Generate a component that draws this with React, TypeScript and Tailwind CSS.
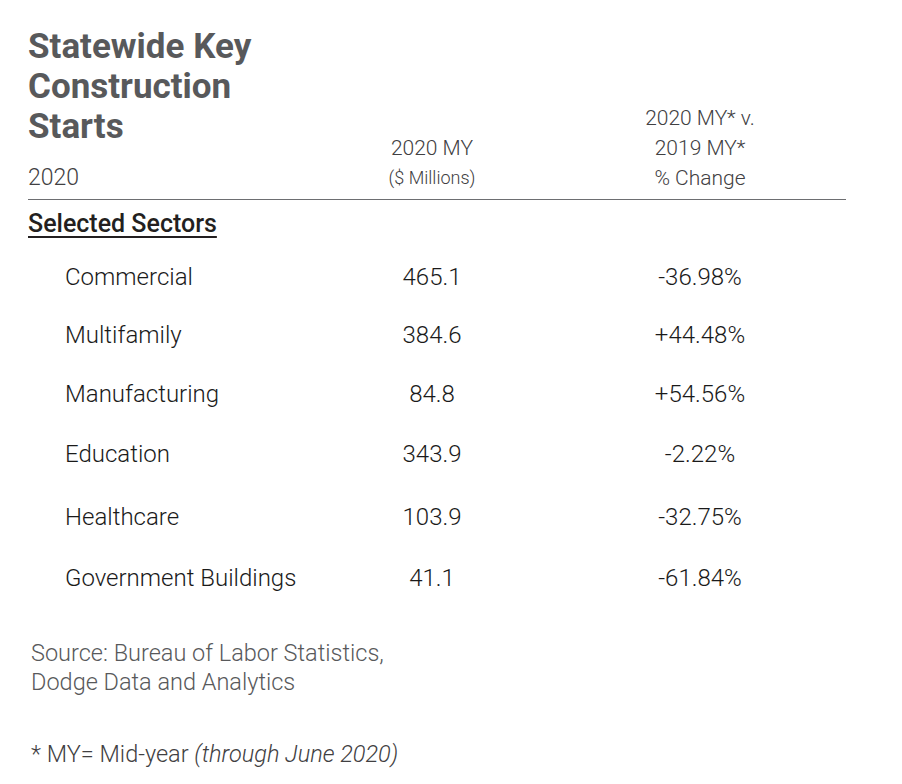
const ROWS = [
  { name: "Commercial", value: "465.1", change: "-36.98%", h: "h-[58px]" },
  { name: "Multifamily", value: "384.6", change: "+44.48%", h: "h-[58px]" },
  { name: "Manufacturing", value: "84.8", change: "+54.56%", h: "h-[59px]" },
  { name: "Education", value: "343.9", change: "-2.22%", h: "h-[62px]" },
  { name: "Healthcare", value: "103.9", change: "-32.75%", h: "h-[63px]" },
  { name: "Government Buildings", value: "41.1", change: "-61.84%", h: "h-[60px]" },
];

export default function App() {
  return (
    <div className="min-h-[784px] w-[902px] bg-white pl-[28px] pt-[27px] font-['Roboto',sans-serif]">
      {/* header */}
      <div className="grid w-[818px] grid-cols-[304px_200px_336px] items-end border-b-[1.5px] border-[#6d6e71] pb-[6px]">
        <div>
          <h1 className="w-[270px] text-[35px] font-bold leading-[40px] text-[#58595b]">
            Statewide Key Construction Starts
          </h1>
          <p className="mt-[16px] text-[23px] font-light leading-[30px] text-[#414042]">2020</p>
        </div>
        <div className="text-center font-light text-[#414042]">
          <p className="text-[21px] leading-[30px]">2020 MY</p>
          <p className="text-[18px] leading-[30px]">($ Millions)</p>
        </div>
        <div className="text-center text-[21px] font-light leading-[30px] text-[#414042]">
          <p>2020 MY* v.</p>
          <p>2019 MY*</p>
          <p>% Change</p>
        </div>
      </div>

      <p className="mt-[9px] text-[25px] font-medium leading-[30px] text-[#231f20] underline decoration-[1.5px] underline-offset-[4px]">
        Selected Sectors
      </p>

      <div className="mt-[9px] w-[818px]">
        {ROWS.map((r) => (
          <div
            key={r.name}
            className={`grid grid-cols-[304px_200px_336px] items-center text-[24px] font-light text-[#1a1a1a] ${r.h}`}
          >
            <span className="pl-[37px]">{r.name}</span>
            <span className="text-center">{r.value}</span>
            <span className="text-center">{r.change}</span>
          </div>
        ))}
      </div>

      <div className="mt-[31px] pl-[3px] text-[23.5px] font-light leading-[29px] text-[#58595b]">
        <p>Source: Bureau of Labor Statistics,</p>
        <p>Dodge Data and Analytics</p>
      </div>

      <p className="mt-[43px] pl-[3px] text-[23.5px] font-light leading-[29px] text-[#414042]">
        * MY= Mid-year <em>(through June 2020)</em>
      </p>
    </div>
  );
}
